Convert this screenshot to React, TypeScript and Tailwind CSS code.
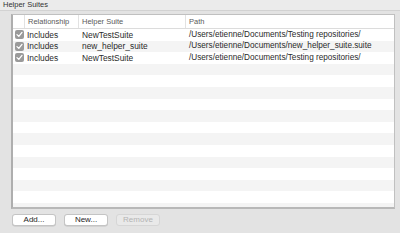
import React from 'react';

interface Suite {
  relationship: string;
  name: string;
  path: string;
}

const suites: Suite[] = [
  { relationship: 'Includes', name: 'NewTestSuite', path: '/Users/etienne/Documents/Testing repositories/' },
  { relationship: 'Includes', name: 'new_helper_suite', path: '/Users/etienne/Documents/new_helper_suite.suite' },
  { relationship: 'Includes', name: 'NewTestSuite', path: '/Users/etienne/Documents/Testing repositories/' },
];

const EMPTY_ROWS = 13;

function Check() {
  return (
    <div className="w-[9px] h-[9px] rounded-[2px] bg-[#9a9a9a] flex items-center justify-center">
      <svg width="7" height="7" viewBox="0 0 7 7">
        <path d="M1 3.6 L2.8 5.4 L6 1.4" fill="none" stroke="#fff" strokeWidth="1.3" strokeLinecap="round" strokeLinejoin="round" />
      </svg>
    </div>
  );
}

function Button({ label, disabled }: { label: string; disabled?: boolean }) {
  return (
    <button
      className={`w-[44px] h-[12px] rounded-[3px] text-[8px] leading-none flex items-center justify-center ${
        disabled
          ? 'bg-[#e9e9e9] border border-[#d6d6d6] text-[#b4b4b4]'
          : 'bg-white border border-[#c4c4c4] text-[#262626] shadow-[0_0.5px_0.5px_rgba(0,0,0,0.15)]'
      }`}
    >
      {label}
    </button>
  );
}

export default function App() {
  return (
    <div className="w-[400px] h-[233px] bg-[#e3e3e3] flex flex-col" style={{ fontFamily: '"Liberation Sans", Arial, sans-serif' }}>
      {/* Title */}
      <div className="h-[11px] bg-[#ebebeb] border-b border-[#d2d2d2] px-[3px] flex items-center text-[7.5px] text-[#333]">
        Helper Suites
      </div>

      {/* Table */}
      <div className="ml-[11px] mr-[5px] mt-[3px] h-[195px] bg-white border border-[#c0c0c0] border-l-[2px] border-l-[#aeaeae] border-b-[2px] border-b-[#b8b8b8] overflow-hidden flex flex-col">
        <div className="h-[14px] shrink-0 flex items-center border-b border-[#dcdcdc] text-[7.5px] text-[#5a5a5a]">
          <div className="w-[12px] h-full border-r border-[#e2e2e2]" />
          <div className="w-[54px] h-full border-r border-[#e2e2e2] pl-[3px] flex items-center">Relationship</div>
          <div className="w-[107px] h-full border-r border-[#e2e2e2] pl-[3px] flex items-center">Helper Suite</div>
          <div className="flex-1 pl-[3px]">Path</div>
        </div>
        {suites.map((s, i) => (
          <div key={i} className={`h-[11.6px] shrink-0 flex items-center text-[8.4px] text-[#2a2a2a] ${i % 2 ? 'bg-[#f4f4f4]' : 'bg-white'}`}>
            <div className="w-[12px] flex justify-center pl-[1px]">
              <Check />
            </div>
            <div className="w-[54px] pl-[2px]">{s.relationship}</div>
            <div className="w-[107px] pl-[3px]">{s.name}</div>
            <div className="flex-1 pl-[3px] whitespace-nowrap text-[8.2px]">{s.path}</div>
          </div>
        ))}
        {Array.from({ length: EMPTY_ROWS }).map((_, i) => (
          <div key={i} className={`h-[11.6px] shrink-0 ${(i + suites.length) % 2 ? 'bg-[#f4f4f4]' : 'bg-white'}`} />
        ))}
      </div>

      {/* Buttons */}
      <div className="flex gap-[8px] ml-[12px] mt-[5px]">
        <Button label="Add..." />
        <Button label="New..." />
        <Button label="Remove" disabled />
      </div>
    </div>
  );
}
